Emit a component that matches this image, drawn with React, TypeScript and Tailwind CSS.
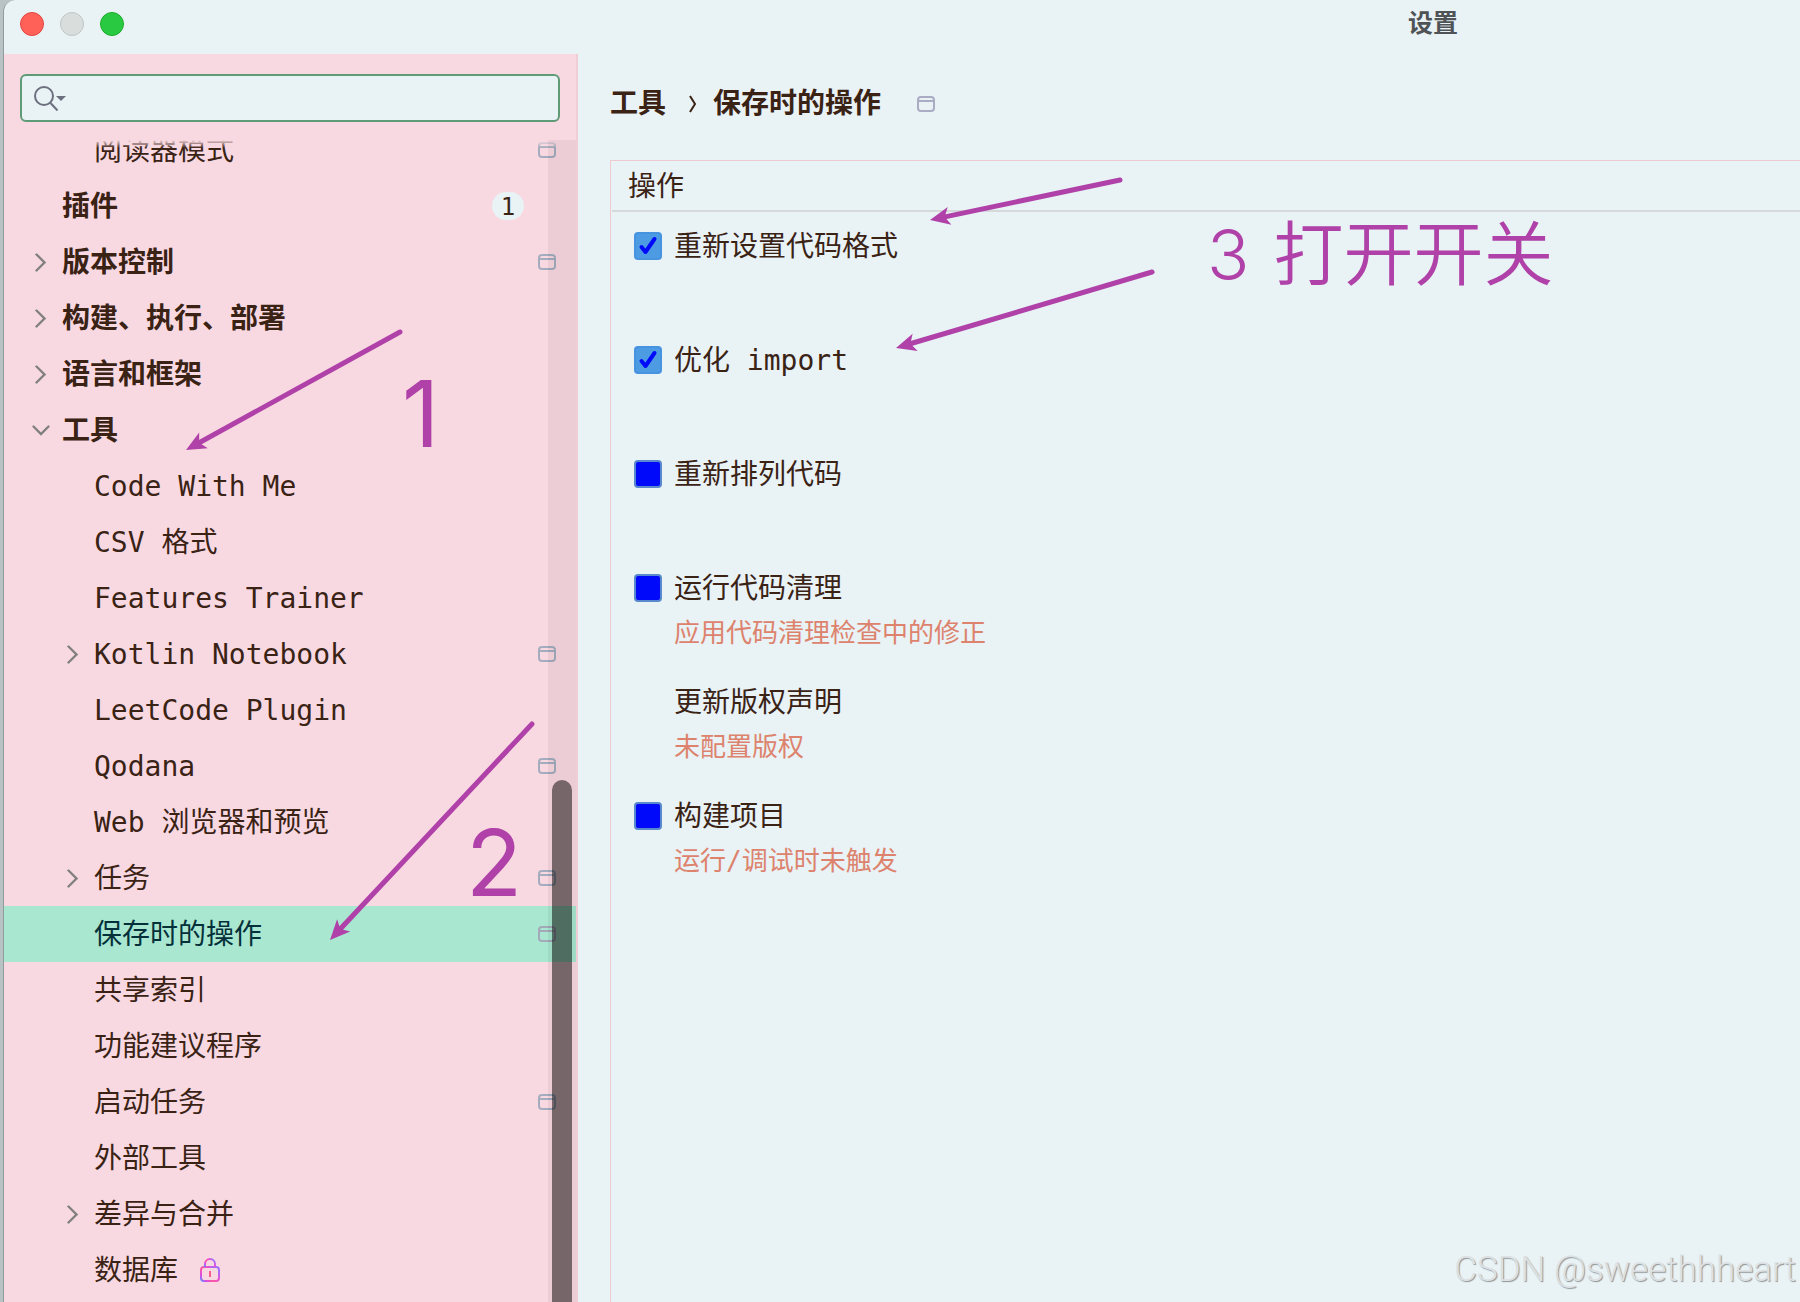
import { useState } from "react";

type TreeItem = {
  label: string;
  level: 0 | 1;
  arrow?: "right" | "down";
  perProject?: boolean;
  badge?: number;
  locked?: boolean;
};

const treeItems: TreeItem[] = [
  { label: "插件", level: 0, badge: 1 },
  { label: "版本控制", level: 0, arrow: "right", perProject: true },
  { label: "构建、执行、部署", level: 0, arrow: "right" },
  { label: "语言和框架", level: 0, arrow: "right" },
  { label: "工具", level: 0, arrow: "down" },
  { label: "Code With Me", level: 1 },
  { label: "CSV 格式", level: 1 },
  { label: "Features Trainer", level: 1 },
  { label: "Kotlin Notebook", level: 1, arrow: "right", perProject: true },
  { label: "LeetCode Plugin", level: 1 },
  { label: "Qodana", level: 1, perProject: true },
  { label: "Web 浏览器和预览", level: 1 },
  { label: "任务", level: 1, arrow: "right", perProject: true },
  { label: "保存时的操作", level: 1, perProject: true },
  { label: "共享索引", level: 1 },
  { label: "功能建议程序", level: 1 },
  { label: "启动任务", level: 1, perProject: true },
  { label: "外部工具", level: 1 },
  { label: "差异与合并", level: 1, arrow: "right" },
  { label: "数据库", level: 1, locked: true },
];

const saveActions = [
  { id: "reformat", label: "重新设置代码格式", checked: true },
  { id: "imports", label: "优化 import", checked: true },
  { id: "rearrange", label: "重新排列代码", checked: false },
  { id: "cleanup", label: "运行代码清理", hint: "应用代码清理检查中的修正", checked: false },
  { id: "copyright", label: "更新版权声明", hint: "未配置版权" },
  { id: "build", label: "构建项目", hint: "运行/调试时未触发", checked: false },
];

function ProjectIcon({ className }: { className?: string }) {
  return (
    <svg width="18" height="16" viewBox="0 0 18 16" fill="none" stroke="currentColor" strokeWidth="2" className={className}>
      <rect x="1" y="1" width="16" height="14" rx="3" />
      <path d="M1 5h16" />
    </svg>
  );
}

function Chevron({ direction }: { direction: "right" | "down" }) {
  return (
    <svg width="20" height="20" viewBox="0 0 20 20" fill="none" stroke="#808080" strokeWidth="2.4" strokeLinecap="round">
      {direction === "right" ? <path d="M5.500 2.500l8 8-8 8" /> : <path d="M2.500 6.500l7.500 7.500 7.500-7.500" />}
    </svg>
  );
}

function LockIcon() {
  return (
    <svg width="20" height="24" viewBox="0 0 20 24" fill="none" strokeWidth="2">
      <defs>
        <linearGradient id="lock" x1="0" y1="1" x2="1" y2="0.3">
          <stop offset="0" stopColor="#5f8bff" />
          <stop offset="0.2" stopColor="#e04be0" />
          <stop offset="0.45" stopColor="#fb5aa0" />
          <stop offset="0.7" stopColor="#ec50d0" />
          <stop offset="1" stopColor="#a070ff" />
        </linearGradient>
      </defs>
      <rect x="1" y="9" width="18" height="14" rx="3" stroke="url(#lock)" />
      <path d="M5 9V6a5 5 0 0 1 10 0v3" stroke="url(#lock)" />
      <path d="M10 13v6" stroke="#fb5a90" />
    </svg>
  );
}

function TreeRow({ item, selected, onSelect }: { item: TreeItem; selected: boolean; onSelect: () => void }) {
  return (
    <li>
      <button
        type="button"
        onClick={onSelect}
        className={`flex h-14 w-full items-center pr-5 text-left ${item.level === 0 ? "pl-[27px] font-bold" : "pl-[59px]"} ${
          selected ? "bg-[#a9e7d0] text-[#04303a]" : ""
        }`}
      >
        <span className="mr-[11px] w-5">{item.arrow && <Chevron direction={item.arrow} />}</span>
        <span className="pt-0.5">{item.label}</span>
        {item.locked && (
          <span className="ml-[22px]">
            <LockIcon />
          </span>
        )}
        {item.badge && (
          <span className="mr-8 ml-auto flex h-7 w-8 items-center justify-center rounded-full bg-[#e9f2f5] pt-0.5 text-2xl font-normal">
            {item.badge}
          </span>
        )}
        {item.perProject && <ProjectIcon className={`ml-auto ${selected ? "text-[#a3a9b8]" : "text-[#a3adbe]"}`} />}
      </button>
    </li>
  );
}

function Sidebar() {
  const [selected, setSelected] = useState("保存时的操作");

  return (
    <aside className="flex w-[574px] shrink-0 flex-col border-r-2 border-[#f0cdd4] bg-[#f9d9e1]">
      <div className="px-4 pt-5 pb-[18px]">
        <label className="flex h-12 items-center rounded-md border-2 border-[#5f9b76] bg-[#e9f2f5] pl-3">
          <svg width="34" height="26" viewBox="0 0 34 26" fill="none" stroke="#6c707e" strokeWidth="2">
            <circle cx="10" cy="11" r="9" />
            <path d="M16.500 18l7 7.500" />
            <path d="M22 11h10l-5 5z" fill="#6c707e" stroke="none" />
          </svg>
          <input type="text" aria-label="搜索设置" className="h-full min-w-0 flex-1 bg-transparent outline-none" />
        </label>
      </div>
      <div className="relative min-h-0 flex-1 overflow-hidden">
        <ul>
          {/* scrolled partly under the search field */}
          <li className="flex h-[38px] items-end justify-between pr-5 pl-[90px]">
            <span className="leading-[54px]">阅读器模式</span>
            <ProjectIcon className="mb-5 text-[#a3adbe]" />
          </li>
          {treeItems.map((item) => (
            <TreeRow
              key={item.label}
              item={item}
              selected={item.label === selected}
              onSelect={() => setSelected(item.label)}
            />
          ))}
        </ul>
        <div className="absolute inset-x-0 top-0 h-2 bg-linear-to-b from-[#f9d9e1] to-transparent" />
        <div className="absolute inset-y-0 right-0 w-7 bg-black/5" />
        <div className="absolute top-[640px] right-1 bottom-0 w-5 rounded-t-full bg-black/50" />
      </div>
    </aside>
  );
}

function ActionCheckbox({ id, defaultChecked }: { id: string; defaultChecked: boolean }) {
  return (
    <span className="relative size-7">
      <input
        id={id}
        type="checkbox"
        defaultChecked={defaultChecked}
        className="peer block size-7 appearance-none rounded-sm border-2 border-[#5a88cc] bg-[#0009f9] checked:border-[#4693df] checked:bg-[#4d9ce3]"
      />
      <svg
        viewBox="0 0 28 28"
        fill="none"
        stroke="#0009f9"
        strokeWidth="4"
        strokeLinecap="round"
        strokeLinejoin="round"
        className="pointer-events-none absolute inset-0 hidden peer-checked:block"
      >
        <path d="M7.500 15l4 5L20.500 7" />
      </svg>
    </span>
  );
}

function SettingsPanel() {
  return (
    <main className="flex min-w-0 flex-1 flex-col pt-[26px] pl-8">
      <nav className="flex h-12 items-center font-bold">
        <a href="#tools">工具</a>
        <svg width="8" height="18" viewBox="0 0 8 18" fill="none" stroke="#3a2315" strokeWidth="2" className="mr-4 ml-[23px]">
          <path d="M1 1l5 8-5 8" />
        </svg>
        <span>保存时的操作</span>
        <ProjectIcon className="ml-9 text-[#a9acc2]" />
      </nav>
      <section className="mt-8 flex-1 border-t border-l border-[#edcbd0]">
        <h2 className="ml-px flex h-[51px] items-center border-b-2 border-[#d6d9da] pt-0.5 pl-4">操作</h2>
        <ul className="pt-[10px] pl-[23px]">
          {saveActions.map((action) => (
            <li key={action.id} className="h-[114px]">
              <div className="flex h-12 items-center gap-3">
                {action.checked === undefined ? (
                  <span className="w-7" />
                ) : (
                  <ActionCheckbox id={action.id} defaultChecked={action.checked} />
                )}
                <label htmlFor={action.checked === undefined ? undefined : action.id} className="pt-0.5">
                  {action.label}
                </label>
              </div>
              {action.hint && <p className="pl-10 text-[26px] leading-[42px] text-[#dd836d]">{action.hint}</p>}
            </li>
          ))}
        </ul>
      </section>
    </main>
  );
}

function Arrow({ from, to }: { from: [number, number]; to: [number, number] }) {
  const length = Math.hypot(to[0] - from[0], to[1] - from[1]);
  const angle = (Math.atan2(to[1] - from[1], to[0] - from[0]) * 180) / Math.PI;

  return (
    <g transform={`translate(${to[0]} ${to[1]}) rotate(${angle})`}>
      <path d={`M${-length} 0H-14`} stroke="#af41a8" strokeWidth="5" strokeLinecap="round" />
      <path d="M0 0L-20 -9L-15 0L-20 9Z" fill="#af41a8" />
    </g>
  );
}

function Annotations() {
  return (
    <div className="pointer-events-none absolute inset-0 font-['Inter','Noto_Sans_CJK_SC',sans-serif] text-[#af41a8]">
      <svg className="absolute inset-0 size-full">
        <Arrow from={[400, 332]} to={[186, 450]} />
        <Arrow from={[532, 724]} to={[330, 940]} />
        <Arrow from={[1120, 180]} to={[930, 220]} />
        <Arrow from={[1152, 272]} to={[896, 348]} />
      </svg>
      <span className="absolute top-[368px] left-[402px] text-[92px] leading-[92px]">1</span>
      <span className="absolute top-[817px] left-[466px] text-[92px] leading-[92px]">2</span>
      <span className="absolute top-[220px] left-[1207px] flex gap-6 text-[70px] leading-[70px]">
        <span className="font-light">3</span>
        <span className="font-[350]">打开开关</span>
      </span>
      <span className="absolute right-1 bottom-2 font-['Roboto',sans-serif] text-[35px] leading-[48px] font-light text-[#dde1e3] [text-shadow:1px_1px_1px_#8f9496]">
        CSDN @sweethhheart
      </span>
    </div>
  );
}

export default function App() {
  return (
    <div className="relative h-screen overflow-hidden bg-[#b9c3c5] pl-[3px] font-['DejaVu_Sans_Mono','Noto_Sans_CJK_SC',monospace] text-[28px] leading-10 text-[#3a2315]">
      <div className="flex h-full flex-col overflow-hidden rounded-tl-xl border-l border-[#8f9c9c] bg-[#e9f2f5]">
        <header className="flex h-[54px] shrink-0 items-center pb-[6px] pl-4">
          <div className="flex gap-4">
            <button type="button" aria-label="关闭" className="size-6 rounded-full border border-[#e2463f] bg-[#ff6159]" />
            <button type="button" aria-label="最小化" className="size-6 rounded-full border border-[#bfc4c4] bg-[#d9dedd]" />
            <button type="button" aria-label="缩放" className="size-6 rounded-full border border-[#1dad2b] bg-[#29c941]" />
          </div>
          <h1 className="mr-[342px] ml-auto text-[25px] font-bold text-[#4f5355]">设置</h1>
        </header>
        <div className="flex min-h-0 flex-1">
          <Sidebar />
          <SettingsPanel />
        </div>
      </div>
      <Annotations />
    </div>
  );
}
